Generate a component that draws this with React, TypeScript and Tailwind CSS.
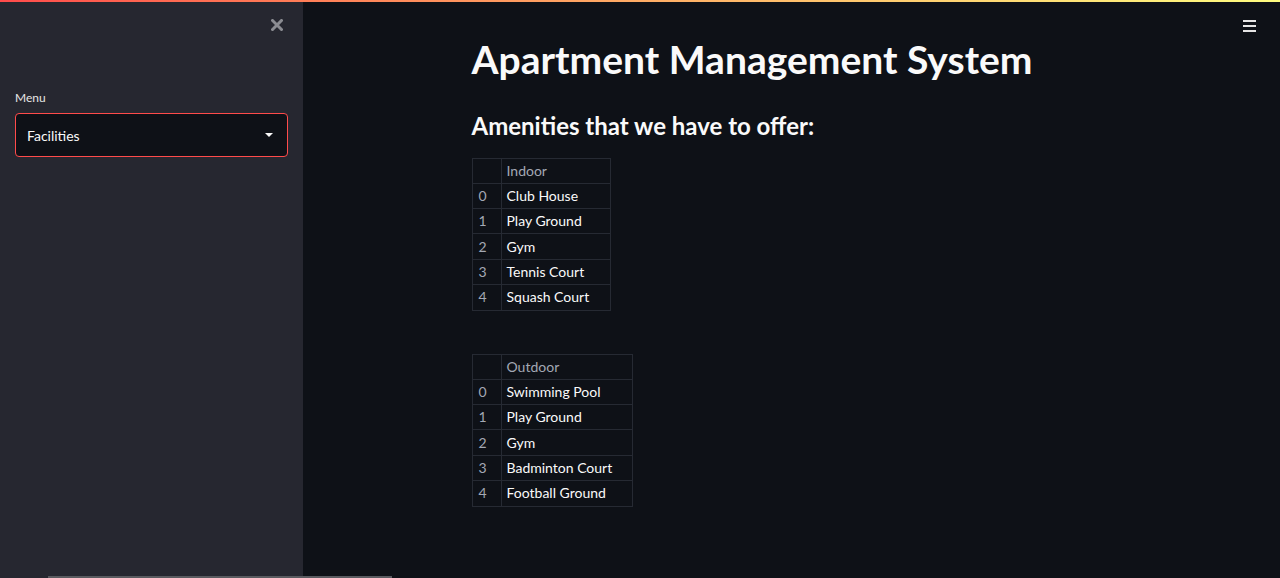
const indoor = ["Club House", "Play Ground", "Gym", "Tennis Court", "Squash Court"];
const outdoor = ["Swimming Pool", "Play Ground", "Gym", "Badminton Court", "Football Ground"];

function DataTable({ column, rows, width }: { column: string; rows: string[]; width: string }) {
  return (
    <table className="border-collapse text-[14px] leading-none">
      <thead>
        <tr className="h-[25px]">
          <th className="w-[29px] border border-[#262a33]" />
          <th className={`${width} border border-[#262a33] px-[5px] text-left font-normal text-[#a3a8b4]`}>
            {column}
          </th>
        </tr>
      </thead>
      <tbody>
        {rows.map((row, i) => (
          <tr key={i} className="h-[25.4px]">
            <td className="border border-[#262a33] pl-[6px] text-[#a3a8b4]">{i}</td>
            <td className="border border-[#262a33] px-[5px] text-[#fafafa]">{row}</td>
          </tr>
        ))}
      </tbody>
    </table>
  );
}

export default function App() {
  return (
    <div className="relative flex h-[578px] w-full flex-col overflow-hidden bg-[#0e1117] font-['Lato',sans-serif] text-[#fafafa]">
      <div className="h-[2px] w-full bg-gradient-to-r from-[#ff4b4b] to-[#fffd80]" />
      <div className="flex min-h-0 flex-1">
        <aside className="flex w-[303px] shrink-0 flex-col bg-[#262730] px-[15px]">
          <div className="flex justify-end pr-[5px] pt-[17px]">
            {/* close icon */}
            <svg width="12" height="12" viewBox="0 0 12 12">
              <path d="M1.5 1.5l9 9M10.5 1.5l-9 9" stroke="#8b8c92" strokeWidth="3" strokeLinecap="square" />
            </svg>
          </div>
          <label className="mt-[58px] text-[12px] text-[#e6e6e6]">Menu</label>
          <div className="mt-[6px] flex h-[44px] items-center justify-between rounded-[4px] border border-[#ff4b4b] bg-[#0e1117] pl-[11px] pr-[14px]">
            <span className="text-[14px]">Facilities</span>
            <svg width="8" height="4" viewBox="0 0 8 4">
              <path d="M0 0h8L4 4z" fill="#fafafa" />
            </svg>
          </div>
        </aside>
        <main className="relative flex flex-1 justify-center">
          <button className="absolute right-[24px] top-[18px] flex flex-col gap-[3px]">
            <span className="block h-[2px] w-[13px] bg-[#e5e5e5]" />
            <span className="block h-[2px] w-[13px] bg-[#e5e5e5]" />
            <span className="block h-[2px] w-[13px] bg-[#e5e5e5]" />
          </button>
          <div className="w-[640px] pt-[36px]">
            <h1 className="text-[39px] font-bold leading-[1.1]">Apartment Management System</h1>
            <h3 className="mt-[31px] text-[24px] font-bold leading-[1.2]">Amenities that we have to offer:</h3>
            <div className="mt-[17px]">
              <DataTable column="Indoor" rows={indoor} width="w-[109px]" />
            </div>
            <div className="mt-[43px]">
              <DataTable column="Outdoor" rows={outdoor} width="w-[131px]" />
            </div>
          </div>
        </main>
      </div>
      <div className="absolute bottom-0 left-[48px] h-[2px] w-[344px] bg-[#5a5b60]" />
    </div>
  );
}
